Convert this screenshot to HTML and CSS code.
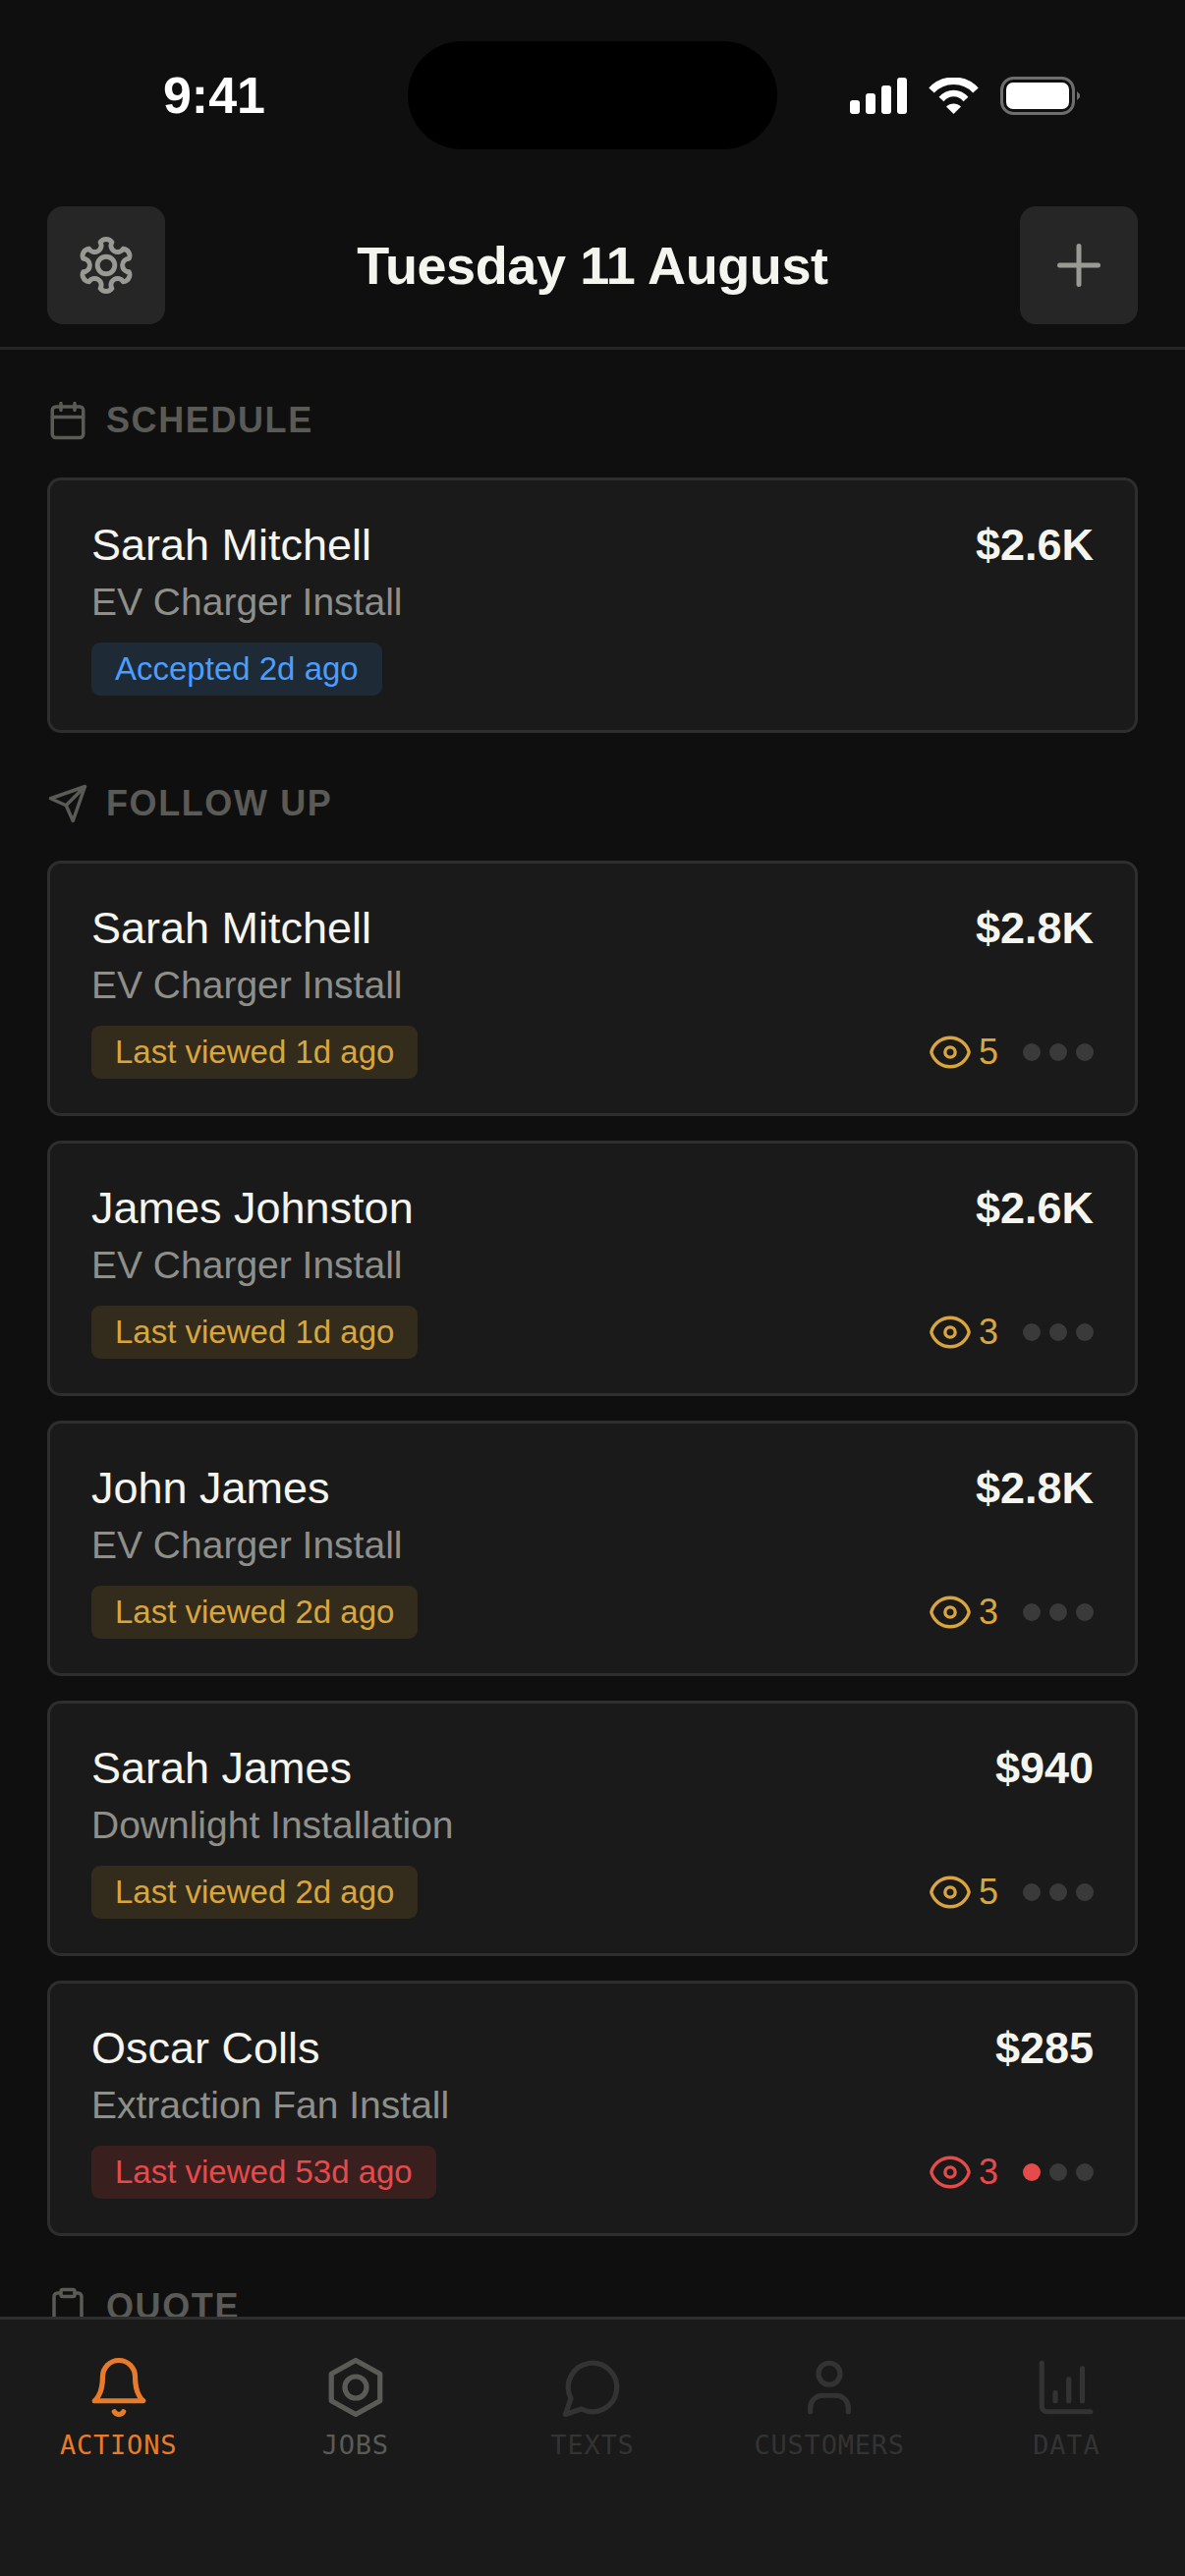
FILE: index.html
```html
<!DOCTYPE html>
<html lang="en">
<head>
  <meta charset="UTF-8">
  <title>Actions</title>
  <link rel="stylesheet" href="styles.css">
</head>
<body>
  <div class="app">
    <div class="status-bar">
      <span class="time">9:41</span>
      <div class="island"></div>
      <div class="status-icons">
        <svg width="58" height="37" viewBox="0 0 58 37" fill="#fff">
          <rect x="0" y="23" width="10" height="14" rx="3"/>
          <rect x="16" y="16" width="10" height="21" rx="3"/>
          <rect x="32" y="8" width="10" height="29" rx="3"/>
          <rect x="48" y="0" width="10" height="37" rx="3"/>
        </svg>
        <svg width="51" height="37" viewBox="0 0 51 37" fill="none" stroke="#fff">
          <path d="M3 13C15 0 36 0 48 13" stroke-width="7.500"/>
          <path d="M13 22C20 14 31 14 38 22" stroke-width="6.500"/>
          <path d="M25.500 37L18 29.500C22 25.500 29 25.500 33 29.500Z" fill="#fff" stroke="none"/>
        </svg>
        <svg width="82" height="39" viewBox="0 0 82 39" fill="none">
          <rect x="1.500" y="1.500" width="73" height="36" rx="12" stroke="#6e6e6e" stroke-width="3"/>
          <rect x="6" y="6" width="64" height="27" rx="7" fill="#fff"/>
          <path d="M78 15L81 18V21L78 24Z" fill="#6e6e6e"/>
        </svg>
      </div>
    </div>

    <header class="top-bar">
      <button class="icon-btn">
        <svg width="66" height="66" viewBox="0 0 24 24" fill="none" stroke="#9a9a95" stroke-width="1.800" stroke-linejoin="round">
          <path d="M9.87 3.46A2.600 2.600 0 0 1 14.13 3.46A2.400 2.400 0 0 0 18.33 5.89A2.600 2.600 0 0 1 20.46 9.57A2.400 2.400 0 0 0 20.46 14.43A2.600 2.600 0 0 1 18.33 18.11A2.400 2.400 0 0 0 14.13 20.54A2.600 2.600 0 0 1 9.87 20.54A2.400 2.400 0 0 0 5.67 18.11A2.600 2.600 0 0 1 3.54 14.43A2.400 2.400 0 0 0 3.54 9.57A2.600 2.600 0 0 1 5.67 5.89A2.400 2.400 0 0 0 9.87 3.46Z"/>
          <circle cx="12" cy="12" r="3.200"/>
        </svg>
      </button>
      <h1>Tuesday 11 August</h1>
      <button class="icon-btn">
        <svg width="60" height="60" viewBox="0 0 24 24" fill="none" stroke="#9a9a95" stroke-width="2" stroke-linecap="round">
          <path d="M12 4.200v15.600M4.200 12h15.600"/>
        </svg>
      </button>
    </header>

    <main class="content">
      <section>
        <div class="section-label">
          <svg width="42" height="42" viewBox="0 0 24 24" fill="none" stroke="#5a5a56" stroke-width="2" stroke-linecap="round" stroke-linejoin="round">
            <rect x="3" y="4" width="18" height="18" rx="2"/>
            <path d="M16 2v4M8 2v4M3 10h18"/>
          </svg>
          <span>SCHEDULE</span>
        </div>
        <div class="card">
          <div class="card-top"><span class="name">Sarah Mitchell</span><span class="price">$2.6K</span></div>
          <div class="job">EV Charger Install</div>
          <div class="card-bottom"><span class="badge badge-blue">Accepted 2d ago</span></div>
        </div>
      </section>

      <section>
        <div class="section-label">
          <svg width="42" height="42" viewBox="0 0 24 24" fill="none" stroke="#5a5a56" stroke-width="2" stroke-linecap="round" stroke-linejoin="round">
            <path d="M22 2L11 13M22 2l-7 20-4-9-9-4z"/>
          </svg>
          <span>FOLLOW UP</span>
        </div>
        <div class="card-list">
          <div class="card">
            <div class="card-top"><span class="name">Sarah Mitchell</span><span class="price">$2.8K</span></div>
            <div class="job">EV Charger Install</div>
            <div class="card-bottom">
              <span class="badge badge-amber">Last viewed 1d ago</span>
              <div class="views views-amber">
                <svg width="46" height="46" viewBox="0 0 24 24" fill="none" stroke="currentColor" stroke-width="1.750" stroke-linecap="round" stroke-linejoin="round"><path d="M2.050 12.300a.9 .9 0 0 1 0-.6 10.400 10.400 0 0 1 19.900 0 .9 .9 0 0 1 0 .6 10.400 10.400 0 0 1-19.900 0"/><circle cx="12" cy="12" r="2.700"/></svg>
                <span class="count">5</span>
                <div class="dots"><i></i><i></i><i></i></div>
              </div>
            </div>
          </div>
          <div class="card">
            <div class="card-top"><span class="name">James Johnston</span><span class="price">$2.6K</span></div>
            <div class="job">EV Charger Install</div>
            <div class="card-bottom">
              <span class="badge badge-amber">Last viewed 1d ago</span>
              <div class="views views-amber">
                <svg width="46" height="46" viewBox="0 0 24 24" fill="none" stroke="currentColor" stroke-width="1.750" stroke-linecap="round" stroke-linejoin="round"><path d="M2.050 12.300a.9 .9 0 0 1 0-.6 10.400 10.400 0 0 1 19.900 0 .9 .9 0 0 1 0 .6 10.400 10.400 0 0 1-19.900 0"/><circle cx="12" cy="12" r="2.700"/></svg>
                <span class="count">3</span>
                <div class="dots"><i></i><i></i><i></i></div>
              </div>
            </div>
          </div>
          <div class="card">
            <div class="card-top"><span class="name">John James</span><span class="price">$2.8K</span></div>
            <div class="job">EV Charger Install</div>
            <div class="card-bottom">
              <span class="badge badge-amber">Last viewed 2d ago</span>
              <div class="views views-amber">
                <svg width="46" height="46" viewBox="0 0 24 24" fill="none" stroke="currentColor" stroke-width="1.750" stroke-linecap="round" stroke-linejoin="round"><path d="M2.050 12.300a.9 .9 0 0 1 0-.6 10.400 10.400 0 0 1 19.900 0 .9 .9 0 0 1 0 .6 10.400 10.400 0 0 1-19.900 0"/><circle cx="12" cy="12" r="2.700"/></svg>
                <span class="count">3</span>
                <div class="dots"><i></i><i></i><i></i></div>
              </div>
            </div>
          </div>
          <div class="card">
            <div class="card-top"><span class="name">Sarah James</span><span class="price">$940</span></div>
            <div class="job">Downlight Installation</div>
            <div class="card-bottom">
              <span class="badge badge-amber">Last viewed 2d ago</span>
              <div class="views views-amber">
                <svg width="46" height="46" viewBox="0 0 24 24" fill="none" stroke="currentColor" stroke-width="1.750" stroke-linecap="round" stroke-linejoin="round"><path d="M2.050 12.300a.9 .9 0 0 1 0-.6 10.400 10.400 0 0 1 19.900 0 .9 .9 0 0 1 0 .6 10.400 10.400 0 0 1-19.900 0"/><circle cx="12" cy="12" r="2.700"/></svg>
                <span class="count">5</span>
                <div class="dots"><i></i><i></i><i></i></div>
              </div>
            </div>
          </div>
          <div class="card">
            <div class="card-top"><span class="name">Oscar Colls</span><span class="price">$285</span></div>
            <div class="job">Extraction Fan Install</div>
            <div class="card-bottom">
              <span class="badge badge-red">Last viewed 53d ago</span>
              <div class="views views-red">
                <svg width="46" height="46" viewBox="0 0 24 24" fill="none" stroke="currentColor" stroke-width="1.750" stroke-linecap="round" stroke-linejoin="round"><path d="M2.050 12.300a.9 .9 0 0 1 0-.6 10.400 10.400 0 0 1 19.900 0 .9 .9 0 0 1 0 .6 10.400 10.400 0 0 1-19.900 0"/><circle cx="12" cy="12" r="2.700"/></svg>
                <span class="count">3</span>
                <div class="dots"><i class="on"></i><i></i><i></i></div>
              </div>
            </div>
          </div>
        </div>
      </section>

      <section>
        <div class="section-label">
          <svg width="42" height="42" viewBox="0 0 24 24" fill="none" stroke="#5a5a56" stroke-width="2" stroke-linecap="round" stroke-linejoin="round">
            <rect x="8" y="2" width="8" height="4" rx="1"/>
            <path d="M16 4h2a2 2 0 0 1 2 2v14a2 2 0 0 1-2 2H6a2 2 0 0 1-2-2V6a2 2 0 0 1 2-2h2"/>
          </svg>
          <span>QUOTE</span>
        </div>
      </section>
    </main>

    <nav class="tab-bar">
      <div class="tab tab-active">
        <svg width="66" height="66" viewBox="0 0 24 24" fill="none" stroke="currentColor" stroke-width="1.900" stroke-linecap="round" stroke-linejoin="round">
          <path d="M6 8a6 6 0 0 1 12 0c0 7 3 9 3 9H3s3-2 3-9"/>
          <path d="M10.300 21a1.940 1.940 0 0 0 3.400 0"/>
        </svg>
        <span>ACTIONS</span>
      </div>
      <div class="tab tab-mid">
        <svg width="66" height="66" viewBox="0 0 24 24" fill="none" stroke="currentColor" stroke-width="1.900" stroke-linecap="round" stroke-linejoin="round">
          <path d="M12 2l9 5v10l-9 5-9-5V7z"/>
          <circle cx="12" cy="12" r="4"/>
        </svg>
        <span>JOBS</span>
      </div>
      <div class="tab">
        <svg width="66" height="66" viewBox="0 0 24 24" fill="none" stroke="currentColor" stroke-width="1.900" stroke-linecap="round" stroke-linejoin="round">
          <path d="M7.900 20A9 9 0 1 0 4 16.100L2 22Z"/>
        </svg>
        <span>TEXTS</span>
      </div>
      <div class="tab">
        <svg width="66" height="66" viewBox="0 0 24 24" fill="none" stroke="currentColor" stroke-width="1.900" stroke-linecap="round" stroke-linejoin="round">
          <circle cx="12" cy="7" r="4"/>
          <path d="M5 21v-1.500a4.500 4.500 0 0 1 4.500-4.500h5a4.500 4.500 0 0 1 4.500 4.500V21"/>
        </svg>
        <span>CUSTOMERS</span>
      </div>
      <div class="tab">
        <svg width="66" height="66" viewBox="0 0 24 24" fill="none" stroke="currentColor" stroke-width="1.900" stroke-linecap="round" stroke-linejoin="round">
          <path d="M3 3v16a2 2 0 0 0 2 2h16"/>
          <path d="M18 17V5M13 17V9M8 17v-3"/>
        </svg>
        <span>DATA</span>
      </div>
    </nav>
  </div>
</body>
</html>
```

FILE: styles.css
```css
* {
  box-sizing: border-box;
}

html, body {
  margin: 0;
  padding: 0;
}

body {
  font-family: 'Liberation Sans', Arial, sans-serif;
  background: #0f0f0f;
  color: #f5f5f0;
}

.app {
  width: 1206px;
  height: 2622px;
  display: flex;
  flex-direction: column;
  overflow: hidden;
}

.status-bar {
  height: 210px;
  flex: none;
  padding-top: 42px;
  display: flex;
  align-items: flex-start;
}

.time {
  width: 415px;
  margin-top: 25px;
  padding-left: 21px;
  text-align: center;
  font-size: 52px;
  line-height: 60px;
  font-weight: 700;
  color: #fff;
}

.island {
  width: 376px;
  height: 110px;
  border-radius: 55px;
  background: #000;
}

.status-icons {
  margin-top: 36px;
  padding-left: 74px;
  display: flex;
  align-items: center;
  gap: 22px;
}

.top-bar {
  height: 146px;
  flex: none;
  padding: 0 48px 23px;
  border-bottom: 3px solid #262626;
  display: flex;
  align-items: center;
  justify-content: space-between;
}

.top-bar h1 {
  margin: 0;
  font-size: 54px;
  font-weight: 700;
  letter-spacing: -0.400px;
  color: #f5f5f0;
}

.icon-btn {
  width: 120px;
  height: 120px;
  padding: 0;
  border: none;
  border-radius: 16px;
  background: #262626;
  display: flex;
  align-items: center;
  justify-content: center;
}

.content {
  flex: 1;
  min-height: 0;
  overflow: hidden;
  padding: 0 48px;
}

.section-label {
  height: 130px;
  padding-top: 14px;
  display: flex;
  align-items: center;
  gap: 18px;
  font-size: 36px;
  font-weight: 700;
  letter-spacing: 1.600px;
  color: #5a5a56;
}

.card-list {
  display: flex;
  flex-direction: column;
  gap: 25px;
}

.card {
  height: 260px;
  padding: 40px 42px 0;
  border: 3px solid #2e2e2e;
  border-radius: 14px;
  background: #1a1a1a;
}

.card-top {
  display: flex;
  justify-content: space-between;
  align-items: center;
  height: 52px;
}

.name {
  font-size: 45px;
  color: #f5f5f0;
}

.price {
  font-size: 45px;
  font-weight: 700;
  color: #f5f5f0;
}

.job {
  margin-top: 7px;
  font-size: 39px;
  line-height: 50px;
  color: #8f8f8a;
}

.card-bottom {
  margin-top: 16px;
  display: flex;
  align-items: center;
  justify-content: space-between;
}

.badge {
  height: 54px;
  padding: 0 24px;
  border-radius: 9px;
  font-size: 33px;
  line-height: 54px;
}

.badge-blue {
  background: #1e2a36;
  color: #4a9eff;
}

.badge-amber {
  background: #332b1b;
  color: #d9a53f;
}

.badge-red {
  background: #3a1f1f;
  color: #e54b4b;
}

.views {
  display: flex;
  align-items: center;
}

.views-amber {
  color: #d9a53f;
}

.views-red {
  color: #e54b4b;
}

.count {
  margin-left: 6px;
  font-size: 36px;
}

.dots {
  margin-left: 25px;
  display: flex;
  gap: 9px;
}

.dots i {
  width: 18px;
  height: 18px;
  border-radius: 50%;
  background: #3a3a3a;
}

.dots i.on {
  background: #e54b4b;
}

.tab-bar {
  height: 264px;
  flex: none;
  padding-top: 36px;
  border-top: 3px solid #2e2e2e;
  background: #1a1a1a;
  display: flex;
  align-items: flex-start;
}

.tab {
  width: 241.200px;
  display: flex;
  flex-direction: column;
  align-items: center;
  gap: 9px;
  color: #333;
  font-family: 'DejaVu Sans Mono', monospace;
  font-size: 27px;
  line-height: 34px;
  letter-spacing: 0.800px;
}

.tab-active {
  color: #e87b2a;
}

.tab-mid {
  color: #5a5a56;
}
```
